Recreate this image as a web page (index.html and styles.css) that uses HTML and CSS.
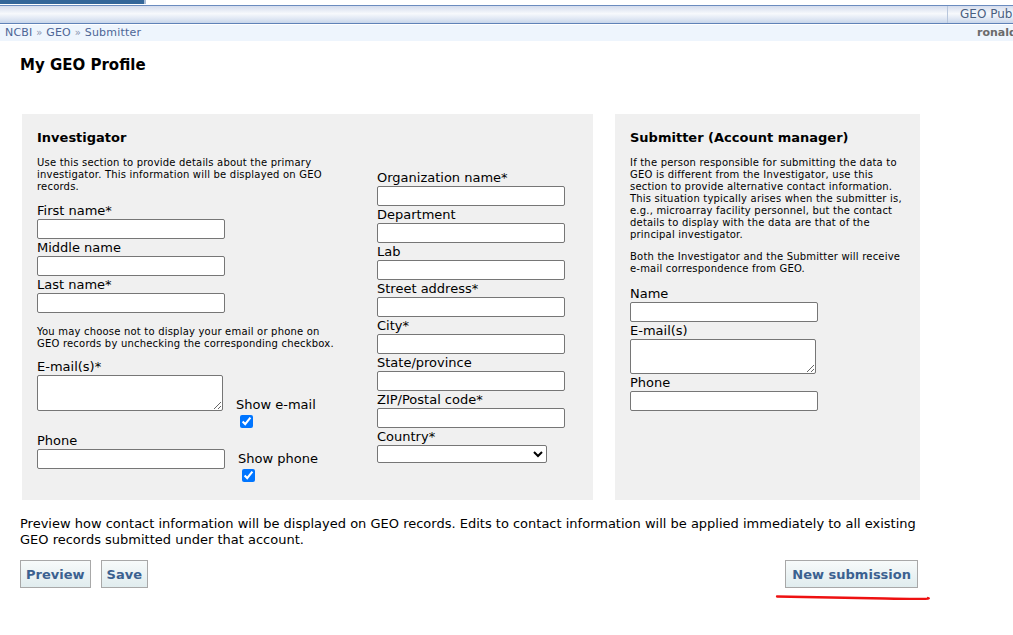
FILE: index.html
```html
<!DOCTYPE html>
<html>
<head>
<meta charset="utf-8">
<link rel="stylesheet" href="styles.css">
</head>
<body>
<div class="topstrip"><div class="toptab"></div></div>
<div class="header">
  <div class="header-fill"></div>
  <div class="header-right">GEO Pub</div>
</div>
<div class="crumbs">
  <div class="crumb-left"><a>NCBI</a> <span class="sep">»</span> <a>GEO</a> <span class="sep">»</span> <a>Submitter</a></div>
  <div class="crumb-user">ronald</div>
</div>

<div class="page">
  <h1 class="title">My GEO Profile</h1>

  <div class="panels">
    <div class="panel panel-inv">
      <div class="col col-left">
        <h2 class="ptitle">Investigator</h2>
        <p class="note">Use this section to provide details about the primary investigator. This information will be displayed on GEO records.</p>
        <label class="lbl">First name*</label>
        <input class="txt" type="text">
        <label class="lbl">Middle name</label>
        <input class="txt" type="text">
        <label class="lbl">Last name*</label>
        <input class="txt" type="text">
        <p class="note note2">You may choose not to display your email or phone on GEO records by unchecking the corresponding checkbox.</p>
        <div class="pairrow">
          <div class="pairmain">
            <label class="lbl">E-mail(s)*</label>
            <textarea class="area"></textarea>
          </div>
          <div class="pairside side-email">
            <span class="sidelbl">Show e-mail</span>
            <input class="chk" type="checkbox" checked>
          </div>
        </div>
        <div class="pairrow">
          <div class="pairmain">
            <label class="lbl">Phone</label>
            <input class="txt" type="text">
          </div>
          <div class="pairside side-phone">
            <span class="sidelbl">Show phone</span>
            <input class="chk" type="checkbox" checked>
          </div>
        </div>
      </div>
      <div class="col col-mid">
        <label class="lbl">Organization name*</label>
        <input class="txt" type="text">
        <label class="lbl">Department</label>
        <input class="txt" type="text">
        <label class="lbl">Lab</label>
        <input class="txt" type="text">
        <label class="lbl">Street address*</label>
        <input class="txt" type="text">
        <label class="lbl">City*</label>
        <input class="txt" type="text">
        <label class="lbl">State/province</label>
        <input class="txt" type="text">
        <label class="lbl">ZIP/Postal code*</label>
        <input class="txt" type="text">
        <label class="lbl">Country*</label>
        <select class="sel"><option></option></select>
      </div>
    </div>

    <div class="panel panel-sub">
      <h2 class="ptitle">Submitter (Account manager)</h2>
      <p class="note">If the person responsible for submitting the data to GEO is different from the Investigator, use this section to provide alternative contact information. This situation typically arises when the submitter is, e.g., microarray facility personnel, but the contact details to display with the data are that of the principal investigator.</p>
      <p class="note note3">Both the Investigator and the Submitter will receive e-mail correspondence from GEO.</p>
      <label class="lbl">Name</label>
      <input class="txt" type="text">
      <label class="lbl">E-mail(s)</label>
      <textarea class="area area2"></textarea>
      <label class="lbl">Phone</label>
      <input class="txt" type="text">
    </div>
  </div>

  <p class="info">Preview how contact information will be displayed on GEO records. Edits to contact information will be applied immediately to all existing GEO records submitted under that account.</p>

  <div class="actions">
    <div class="btns">
      <button class="btn">Preview</button>
      <button class="btn">Save</button>
    </div>
    <div class="newwrap">
      <button class="btn btn-new">New submission</button>
      <svg class="scribble" width="156" height="8" viewBox="0 0 156 8"><path d="M2 2.5 Q 60 3.5 110 4.5 T 153 4" stroke="#ee1111" stroke-width="2.3" fill="none" stroke-linecap="round"/></svg>
    </div>
  </div>
</div>
</body>
</html>
```
FILE: styles.css
```css
* { box-sizing: border-box; }
html, body { margin: 0; padding: 0; background: #fff; }
body { font-family: "DejaVu Sans", Verdana, sans-serif; color: #000; width: 1013px; min-height: 635px; }

.topstrip { height: 5px; background: #fff; }
.toptab { width: 146px; height: 4px; background: #336699; border-right: 2px solid #a9bcd6; }

.header {
  height: 19px;
  border-top: 1px solid #6b8cbf;
  border-bottom: 1px solid #5f82b8;
  background: linear-gradient(#d4dced 0%, #f7f9fc 45%, #dbe4f2 80%, #c7d5ea 100%);
  display: flex;
  justify-content: space-between;
}
.header-right {
  border-left: 1px solid #b8c6dc;
  padding-left: 12px;
  width: 66px;
  white-space: nowrap;
  font-size: 12px;
  line-height: 17px;
  color: #4a5f80;
}

.crumbs {
  margin-top: 1px;
  height: 16px;
  background: #eef5fd;
  display: flex;
  justify-content: space-between;
  font-size: 11px;
  line-height: 16px;
}
.crumb-left { padding-left: 5px; color: #4d6596; letter-spacing: 0.2px; }
.crumb-left a { color: #4d6596; }
.crumb-left .sep { color: #8a96b0; font-size: 10px; }
.crumb-user { font-weight: bold; color: #6b6b6b; width: 36px; white-space: nowrap; }

.page { padding-left: 20px; width: 940px; }
.title { margin: 15px 0 0; font-size: 15px; line-height: 18px; font-weight: bold; height: 18px; }

.panels { display: flex; gap: 22px; margin-top: 40px; padding-left: 2px; }
.panel { background: #f0f0f0; height: 386px; }
.panel-inv { width: 571px; display: flex; padding: 15px 0 0 15px; }
.panel-sub { width: 305px; padding: 15px 0 0 15px; display: flex; flex-direction: column; align-items: flex-start; }

.col { display: flex; flex-direction: column; align-items: flex-start; }
.col-left { width: 340px; }
.col-mid { padding-top: 40px; }

.ptitle { margin: 0; font-size: 13px; line-height: 18px; font-weight: bold; }
.note { margin: 10px 0 0; font-size: 10px; letter-spacing: 0.2px; line-height: 12px; color: #000; width: 300px; }
.panel-sub .note { width: 280px; }
.note2 { margin-top: 13px; width: 300px; }
.panel-sub .note3 { margin-top: 10px; }

.lbl { font-size: 13px; line-height: 16px; padding-top: 1px; display: block; color: #000; }
.note + .lbl { margin-top: 9px; }
.panel-sub .note3 + .lbl { margin-top: 10px; }

.txt {
  width: 188px; height: 20px; margin: 0;
  border: 1px solid #767676; border-radius: 2px; background: #fff; padding: 0;
  display: block;
}
.area {
  width: 186px; height: 36px; margin: 0; resize: both;
  border: 1px solid #767676; border-radius: 2px; background: #fff; padding: 0; display: block;
}
.area2 { height: 35px; }
.sel {
  width: 170px; height: 18px; margin: 0;
  border: 1px solid #767676; border-radius: 2px; background: #fff; display: block;
}

.pairrow { display: flex; align-items: flex-start; }
.pairmain { width: 199px; }
.note2 + .pairrow { margin-top: 8px; }
.pairrow + .pairrow { margin-top: 4px; }
.pairside { display: flex; flex-direction: column; align-items: flex-start; font-size: 13px; line-height: 17px; }
.side-email { padding-top: 38px; }
.side-phone { padding-top: 18px; padding-left: 2px; }
.chk { width: 13px; height: 13px; margin: 2px 0 0 4px; accent-color: #0075ff; }

.info { margin: 16px 0 0; font-size: 13px; line-height: 16px; width: 905px; }

.actions { display: flex; justify-content: space-between; margin-top: 12px; width: 898px; }
.btns { display: flex; gap: 10px; align-self: flex-start; }
.btn {
  height: 28px; padding: 0 5px;
  font-family: "DejaVu Sans", Verdana, sans-serif;
  font-size: 13px; font-weight: bold; color: #3b6190;
  border: 1px solid #a8a8a8;
  background: linear-gradient(#f7fafa, #e0ecee);
  border-radius: 0;
}
.btn-new { padding: 0 6px; }
.newwrap { display: flex; flex-direction: column; align-items: flex-end; }
.scribble { display: block; margin: 6px -13px 0 0; }
```
